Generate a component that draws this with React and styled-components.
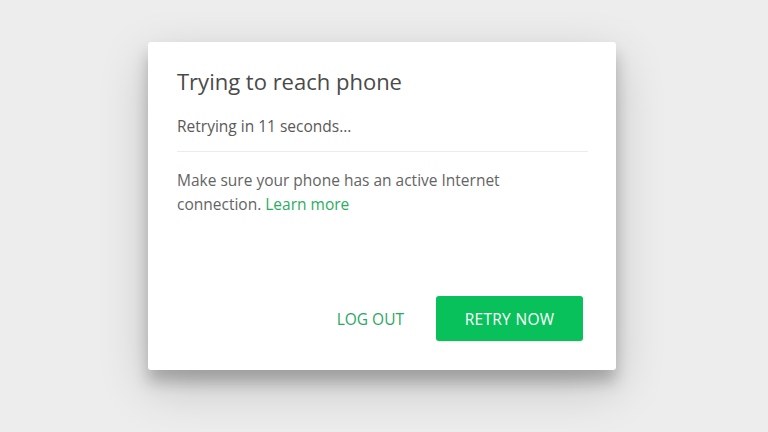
import React from 'react';
import styled, { createGlobalStyle } from 'styled-components';

const GlobalStyle = createGlobalStyle`
  html, body {
    margin: 0;
    padding: 0;
    background: #ededed;
  }
  body {
    font-family: "Open Sans", "Noto Sans", sans-serif;
  }
`;

const App = () => {
  const seconds = 11;
  return (
    <>
      <GlobalStyle />
      <Screen>
        <Dialog>
          <Title>Trying to reach phone</Title>
          <Status>Retrying in {seconds} seconds...</Status>
          <Divider />
          <Body>
            Make sure your phone has an active Internet connection.{' '}
            <LearnMore href="#">Learn more</LearnMore>
          </Body>
          <Actions>
            <TextButton>LOG OUT</TextButton>
            <PrimaryButton>RETRY NOW</PrimaryButton>
          </Actions>
        </Dialog>
      </Screen>
    </>
  );
};

const Screen = styled.div`
  width: 768px;
  height: 432px;
  box-sizing: border-box;
  padding: 42px 0 0 148px;
  overflow: hidden;
`;

const Dialog = styled.div`
  width: 468px;
  height: 328px;
  box-sizing: border-box;
  padding: 23px 28px 29px 29px;
  background: #fff;
  border-radius: 3px;
  box-shadow: 0 17px 50px rgba(0, 0, 0, 0.19), 0 12px 15px rgba(0, 0, 0, 0.22);
  display: flex;
  flex-direction: column;
`;

const Title = styled.h2`
  margin: 0;
  font-size: 22px;
  font-weight: 400;
  line-height: 32px;
  color: #4a4a4a;
`;

const Status = styled.div`
  margin-top: 18px;
  font-size: 15.5px;
  line-height: 22px;
  color: #595959;
`;

const Divider = styled.div`
  height: 1px;
  background: #ececec;
  margin-top: 14px;
`;

const Body = styled.p`
  margin: 16px 0 0;
  width: 360px;
  font-size: 15.5px;
  line-height: 24px;
  color: #646464;
`;

const LearnMore = styled.a`
  color: #2aad62;
  text-decoration: none;
`;

const Actions = styled.div`
  margin-top: auto;
  display: flex;
  justify-content: flex-end;
  align-items: center;
  gap: 22px;
  padding-right: 5px;
`;

const TextButton = styled.button`
  border: none;
  background: none;
  padding: 0 10px;
  height: 45px;
  font-family: inherit;
  font-size: 15.5px;
  color: #2aa862;
  cursor: pointer;
`;

const PrimaryButton = styled.button`
  border: none;
  width: 147px;
  height: 45px;
  border-radius: 3px;
  background: #09c15b;
  color: #fff;
  font-family: inherit;
  font-size: 15.5px;
  letter-spacing: 0.3px;
  cursor: pointer;
  box-shadow: 0 1px 1px rgba(0, 0, 0, 0.08);
`;

export default App;
